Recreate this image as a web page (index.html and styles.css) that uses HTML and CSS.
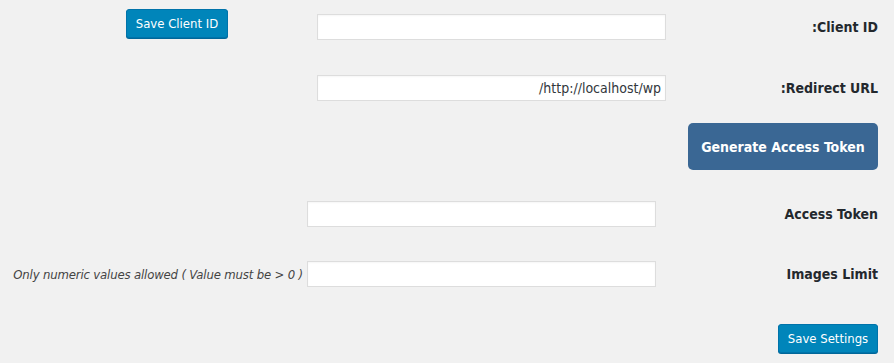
FILE: index.html
```html
<!DOCTYPE html>
<html dir="rtl">
<head>
<meta charset="utf-8">
<link rel="stylesheet" href="styles.css">
</head>
<body>
<div class="page">
  <div class="row row-client">
    <label class="lbl lbl-wide">Client ID:</label>
    <input class="field" type="text" value="">
    <button class="btn btn-client">Save Client ID</button>
  </div>
  <div class="row row-redirect">
    <label class="lbl lbl-wide">Redirect URL:</label>
    <input class="field" type="text" value="http://localhost/wp/">
  </div>
  <div class="row row-generate">
    <button class="btn-generate">Generate Access Token</button>
  </div>
  <div class="row row-token">
    <label class="lbl lbl-narrow">Access Token</label>
    <input class="field" type="text" value="">
  </div>
  <div class="row row-limit">
    <label class="lbl lbl-narrow">Images Limit</label>
    <input class="field" type="text" value="">
    <span class="hint" dir="ltr">Only numeric values allowed ( Value must be &gt; 0 )</span>
  </div>
  <div class="row row-save">
    <button class="btn btn-save">Save Settings</button>
  </div>
</div>
</body>
</html>
```
FILE: styles.css
```css
* { box-sizing: border-box; }
html, body { margin: 0; padding: 0; background: #f1f1f1; }
body {
  font-family: "DejaVu Sans Condensed", "DejaVu Sans", sans-serif;
  color: #23282d;
  font-size: 13px;
}
.page {
  width: 894px;
  height: 363px;
  padding: 14px 16px 0 0;
}
.row {
  display: flex;
  flex-direction: row;
  align-items: center;
  height: 26px;
}
.row-redirect { margin-top: 35px; }
.row-generate { margin-top: 22px; height: 47px; }
.row-token { margin-top: 31px; }
.row-limit { margin-top: 34px; }
.row-save { margin-top: 37px; height: 29px; }

.lbl {
  font-weight: bold;
  font-size: 14px;
  color: #23282d;
  text-align: right;
  flex: none;
}
.lbl-wide { width: 212px; }
.lbl-narrow { width: 222px; }

.field {
  width: 349px;
  height: 26px;
  border: 1px solid #dddddd;
  background: #fff;
  box-shadow: inset 0 1px 2px rgba(0,0,0,0.04);
  font-family: inherit;
  font-size: 14px;
  color: #32373c;
  padding: 0 4px;
  margin: 0;
  flex: none;
  text-align: right;
}
.btn {
  flex: none;
  height: 29px;
  padding: 0;
  white-space: nowrap;
  background: #0085ba;
  border: 1px solid #0073aa;
  border-radius: 3px;
  box-shadow: 0 1px 0 #006799;
  color: #fff;
  font-family: inherit;
  font-size: 13px;
  line-height: 26px;
  text-align: center;
}
.btn-client {
  align-self: flex-start;
  margin-top: -5px;
  margin-right: 89px;
  width: 102px;
}
.btn-save { width: 100px; }
.btn-generate {
  flex: none;
  width: 190px;
  height: 47px;
  background: #3a6794;
  border: none;
  border-radius: 5px;
  color: #fff;
  font-family: inherit;
  font-weight: bold;
  font-size: 14px;
  white-space: nowrap;
}
.hint {
  margin-right: 4px;
  font-style: italic;
  font-size: 13px;
  letter-spacing: -0.16px;
  color: #444;
  white-space: nowrap;
}
```
